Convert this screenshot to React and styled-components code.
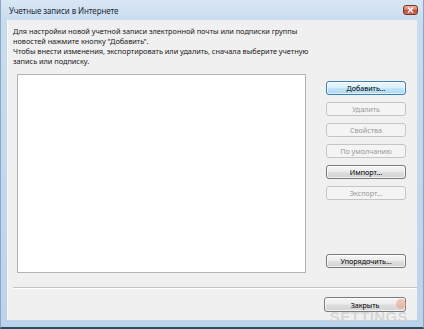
import React from "react";
import styled, { createGlobalStyle, css } from "styled-components";

const Global = createGlobalStyle`
  html, body { margin: 0; padding: 0; background: #1d4a56; }
  body { font-family: "Noto Sans", "Liberation Sans", sans-serif; }
`;

const Frame = styled.div`
  position: relative;
  width: 424px;
  height: 329px;
  box-sizing: border-box;
  display: flex;
  flex-direction: column;
  padding: 0 6px 7px 6px;
  background: linear-gradient(180deg, #d9e7f4 0px, #c9dcef 20px, #bcd3eb 100%);
  border-left: 1px solid #8aa6c4;
  border-right: 1px solid #8aa6c4;
  border-bottom: 2px solid #21535e;
  overflow: hidden;
`;

const TitleBar = styled.div`
  height: 20px;
  flex: none;
  display: flex;
  align-items: center;
  justify-content: space-between;
  padding-left: 2px;
`;

const Title = styled.span`
  font-size: 8px;
  color: #1e2a36;
  letter-spacing: -0.1px;
  margin-top: 1px;
`;

const CloseBtn = styled.div`
  width: 15px;
  height: 10px;
  margin-right: -1px;
  margin-bottom: 1px;
  box-sizing: border-box;
  border: 1px solid #7a3326;
  border-radius: 3px;
  background: linear-gradient(180deg, #eab3a4 0%, #d67f6c 45%, #c24d37 55%, #d0705a 100%);
  display: flex;
  align-items: center;
  justify-content: center;
  svg { display: block; }
`;

const Client = styled.div`
  flex: 1;
  background: #f0f0f0;
  border-left: 1px solid #f7f9fb;
  display: flex;
  flex-direction: column;
  min-height: 0;
`;

const Intro = styled.p`
  margin: 6px 0 0 5px;
  font-size: 7.4px;
  line-height: 10px;
  color: #1a1a1a;
  white-space: nowrap;
  letter-spacing: -0.05px;
`;

const Main = styled.div`
  display: flex;
  margin: 8px 11px 0 9px;
  gap: 20px;
`;

const ListBox = styled.div`
  width: 289px;
  height: 199px;
  box-sizing: border-box;
  background: #ffffff;
  border: 1px solid #b4b4b4;
`;

const ButtonColumn = styled.div`
  flex: 1;
  display: flex;
  flex-direction: column;
  gap: 7px;
  padding: 7px 0 5px 0;
`;

const Spacer = styled.div`
  flex: 1;
`;

const Button = styled.div`
  height: 14px;
  box-sizing: border-box;
  border-radius: 3px;
  display: flex;
  align-items: center;
  justify-content: center;
  font-size: 7.2px;
  letter-spacing: -0.05px;
  white-space: nowrap;
  ${({ $variant }) =>
    $variant === "focused"
      ? css`
          border: 1px solid #3c7fb1;
          background: linear-gradient(180deg, #edf7fd 0%, #ddf1fc 45%, #c2e5f9 55%, #acd8f2 100%);
          box-shadow: inset 0 0 0 1px rgba(255, 255, 255, 0.6);
          color: #000;
        `
      : $variant === "disabled"
      ? css`
          border: 1px solid #c2c6c9;
          background: #f4f4f4;
          color: #9a9a9a;
        `
      : css`
          border: 1px solid #7a7a7a;
          background: linear-gradient(180deg, #f6f6f6 0%, #ececec 45%, #dedede 55%, #d2d2d2 100%);
          box-shadow: inset 0 0 0 1px rgba(255, 255, 255, 0.7);
          color: #000;
        `}
`;

const Separator = styled.div`
  height: 0;
  border-top: 1px solid #c4c4c4;
  border-bottom: 1px solid #ffffff;
  margin: 14px 0 0 5px;
`;

const Footer = styled.div`
  display: flex;
  justify-content: flex-end;
  padding: 8px 11px 0 0;
`;

const FooterButton = styled(Button)`
  width: 82px;
  height: 15px;
`;

const Watermark = styled.div`
  position: absolute;
  right: 15px;
  bottom: 3px;
  line-height: 14px;
  font-family: "Liberation Sans", sans-serif;
  font-weight: 700;
  font-size: 15px;
  letter-spacing: 0.4px;
  color: rgba(205, 205, 205, 0.75);
  pointer-events: none;
`;

const Badge = styled.div`
  position: absolute;
  left: 395px;
  top: 299px;
  width: 10px;
  height: 10px;
  border-radius: 50%;
  background: rgba(240, 150, 120, 0.5);
`;

const buttons = [
  { label: "Добавить...", variant: "focused" },
  { label: "Удалить", variant: "disabled" },
  { label: "Свойства", variant: "disabled" },
  { label: "По умолчанию", variant: "disabled" },
  { label: "Импорт...", variant: "normal" },
  { label: "Экспорт...", variant: "disabled" },
];

export default function App() {
  return (
    <>
      <Global />
      <Frame>
        <TitleBar>
          <Title>Учетные записи в Интернете</Title>
          <CloseBtn>
            <svg width="7" height="6" viewBox="0 0 7 6">
              <path d="M1 0.5 L6 5.5 M6 0.5 L1 5.5" stroke="#fff" strokeWidth="1.4" />
            </svg>
          </CloseBtn>
        </TitleBar>
        <Client>
          <Intro>
            Для настройки новой учетной записи электронной почты или подписки группы
            <br />
            новостей нажмите кнопку "Добавить".
            <br />
            Чтобы внести изменения, экспортировать или удалить, сначала выберите учетную
            <br />
            запись или подписку.
          </Intro>
          <Main>
            <ListBox />
            <ButtonColumn>
              {buttons.map((b) => (
                <Button key={b.label} $variant={b.variant}>
                  {b.label}
                </Button>
              ))}
              <Spacer />
              <Button $variant="normal">Упорядочить...</Button>
            </ButtonColumn>
          </Main>
          <Separator />
          <Footer>
            <FooterButton $variant="normal">Закрыть</FooterButton>
          </Footer>
        </Client>
        <Badge />
        <Watermark>SETTINGS</Watermark>
      </Frame>
    </>
  );
}
